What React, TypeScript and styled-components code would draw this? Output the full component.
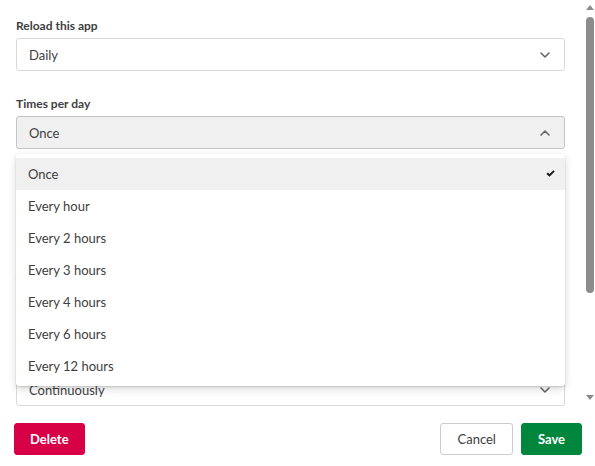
import styled, { createGlobalStyle } from "styled-components";

const GlobalStyle = createGlobalStyle`
    html, body {
        margin:0;
        padding:0;
        background:#ffffff;
    }
    body {
        font-family:Lato, "Liberation Sans", sans-serif;
        color:#404040;
    }
    * {
        box-sizing:border-box;
    }
`;

const Dialog = styled.div`
    width:595px;
    height:466px;
    display:flex;
    flex-direction:column;
    background:#ffffff;
`;

const Body = styled.div`
    flex:1;
    min-height:0;
    display:flex;
`;

const Content = styled.div`
    flex:1;
    min-width:0;
    overflow:hidden;
    padding:17px 20px 0 16px;
`;

const Track = styled.div`
    flex:none;
    width:10px;
    display:flex;
    flex-direction:column;
    align-items:center;
    padding-bottom:3px;
`;

const Arrow = styled.div`
    height:15px;
    display:flex;
    align-items:center;
    justify-content:center;
`;

const Thumb = styled.div`
    width:8px;
    height:276px;
    margin-top:2px;
    border-radius:4px;
    background:#8c8c8c;
`;

const TrackRest = styled.div`
    flex:1;
`;

const Field = styled.div`
    position:relative;
    margin-bottom:24px;
`;

const Label = styled.div`
    font-size:12px;
    font-weight:700;
    line-height:16px;
    padding-top:1px;
    margin-bottom:4px;
    color:#404040;
`;

const Select = styled.div<{ $open?: boolean }>`
    height:33px;
    display:flex;
    align-items:center;
    justify-content:space-between;
    padding:0 14px 0 12px;
    border:1px solid ${p => (p.$open ? "#c4c4c4" : "#d9d9d9")};
    border-radius:3px;
    background:${p => (p.$open ? "#f0f0f0" : "#ffffff")};
    font-size:13px;
    color:#404040;
    cursor:pointer;
`;

const Row = styled.div`
    display:grid;
    grid-template-columns:1fr 1fr;
    gap:8px;
`;

const Hint = styled.div`
    margin-top:7px;
    font-size:12px;
    line-height:16px;
    color:#737373;
`;

const Menu = styled.ul`
    position:absolute;
    top:calc(100% + 5px);
    left:0;
    right:0;
    z-index:10;
    margin:0;
    padding:4px 0;
    list-style:none;
    background:#ffffff;
    border-radius:3px;
    box-shadow:0 1px 2px rgba(0, 0, 0, 0.15), 0 3px 8px rgba(0, 0, 0, 0.15);
`;

const Item = styled.li<{ $selected?: boolean }>`
    height:32px;
    display:flex;
    align-items:center;
    justify-content:space-between;
    padding:0 10px 1px 12px;
    font-size:13px;
    color:#404040;
    background:${p => (p.$selected ? "#f0f0f0" : "transparent")};
`;

const Footer = styled.div`
    flex:none;
    height:58px;
    display:flex;
    align-items:flex-start;
    padding:15px 13px 0 14px;
    gap:8px;
`;

const Spacer = styled.div`
    flex:1;
`;

const Button = styled.button<{ $variant: "danger" | "primary" | "default" }>`
    height:32px;
    padding:0 ${p => (p.$variant === "danger" ? 15 : 16)}px;
    border-radius:3px;
    font-family:inherit;
    font-size:13px;
    font-weight:${p => (p.$variant === "default" ? 400 : 700)};
    cursor:pointer;
    border:1px solid ${p =>
        p.$variant === "danger" ? "#d70047" : p.$variant === "primary" ? "#00873d" : "#cccccc"};
    background:${p =>
        p.$variant === "danger" ? "#d70047" : p.$variant === "primary" ? "#00873d" : "#ffffff"};
    color:${p => (p.$variant === "default" ? "#404040" : "#ffffff")};
`;

function Chevron({ up }: { up?: boolean }) {
    return (
        <svg width="10" height="6" viewBox="0 0 10 6" fill="none">
            <polyline
                points={up ? "1,5 5,1 9,5" : "1,1 5,5 9,1"}
                stroke="#666666"
                strokeWidth="1.6"
                strokeLinecap="round"
                strokeLinejoin="round"
            />
        </svg>
    );
}

function Check() {
    return (
        <svg width="9" height="7" viewBox="0 0 10 8">
            <path d="M0.3 4.6 L2.1 2.9 L3.9 4.7 L8.3 0.2 L9.8 1.6 L3.9 7.8 Z" fill="#1a1a1a" />
        </svg>
    );
}

function Triangle({ down }: { down?: boolean }) {
    return (
        <svg width="8" height="5" viewBox="0 0 8 5">
            <path d={down ? "M0 0 H8 L4 5 Z" : "M0 5 H8 L4 0 Z"} fill="#8c8c8c" />
        </svg>
    );
}

const options = [
    "Once",
    "Every hour",
    "Every 2 hours",
    "Every 3 hours",
    "Every 4 hours",
    "Every 6 hours",
    "Every 12 hours",
];

export default function App() {
    const selected = "Once";
    return (
        <>
            <GlobalStyle />
            <Dialog>
                <Body>
                    <Content>
                        <Field>
                            <Label>Reload this app</Label>
                            <Select>
                                <span>Daily</span>
                                <Chevron />
                            </Select>
                        </Field>
                        <Field>
                            <Label>Times per day</Label>
                            <Select $open>
                                <span>{selected}</span>
                                <Chevron up />
                            </Select>
                            <Menu>
                                {options.map(o => (
                                    <Item key={o} $selected={o === selected}>
                                        <span>{o}</span>
                                        {o === selected ? <Check /> : null}
                                    </Item>
                                ))}
                            </Menu>
                        </Field>
                        <Field>
                            <Label>Start</Label>
                            <Row>
                                <Select>
                                    <span>00</span>
                                    <Chevron />
                                </Select>
                                <Select>
                                    <span>00</span>
                                    <Chevron />
                                </Select>
                            </Row>
                            <Hint>Based on the time zone below.</Hint>
                        </Field>
                        <Field>
                            <Label>Time zone</Label>
                            <Select>
                                <span>UTC</span>
                                <Chevron />
                            </Select>
                        </Field>
                        <Field>
                            <Label>Run</Label>
                            <Select>
                                <span>Continuously</span>
                                <Chevron />
                            </Select>
                        </Field>
                    </Content>
                    <Track>
                        <Arrow>
                            <Triangle />
                        </Arrow>
                        <Thumb />
                        <TrackRest />
                        <Arrow>
                            <Triangle down />
                        </Arrow>
                    </Track>
                </Body>
                <Footer>
                    <Button $variant="danger">Delete</Button>
                    <Spacer />
                    <Button $variant="default">Cancel</Button>
                    <Button $variant="primary">Save</Button>
                </Footer>
            </Dialog>
        </>
    );
}
